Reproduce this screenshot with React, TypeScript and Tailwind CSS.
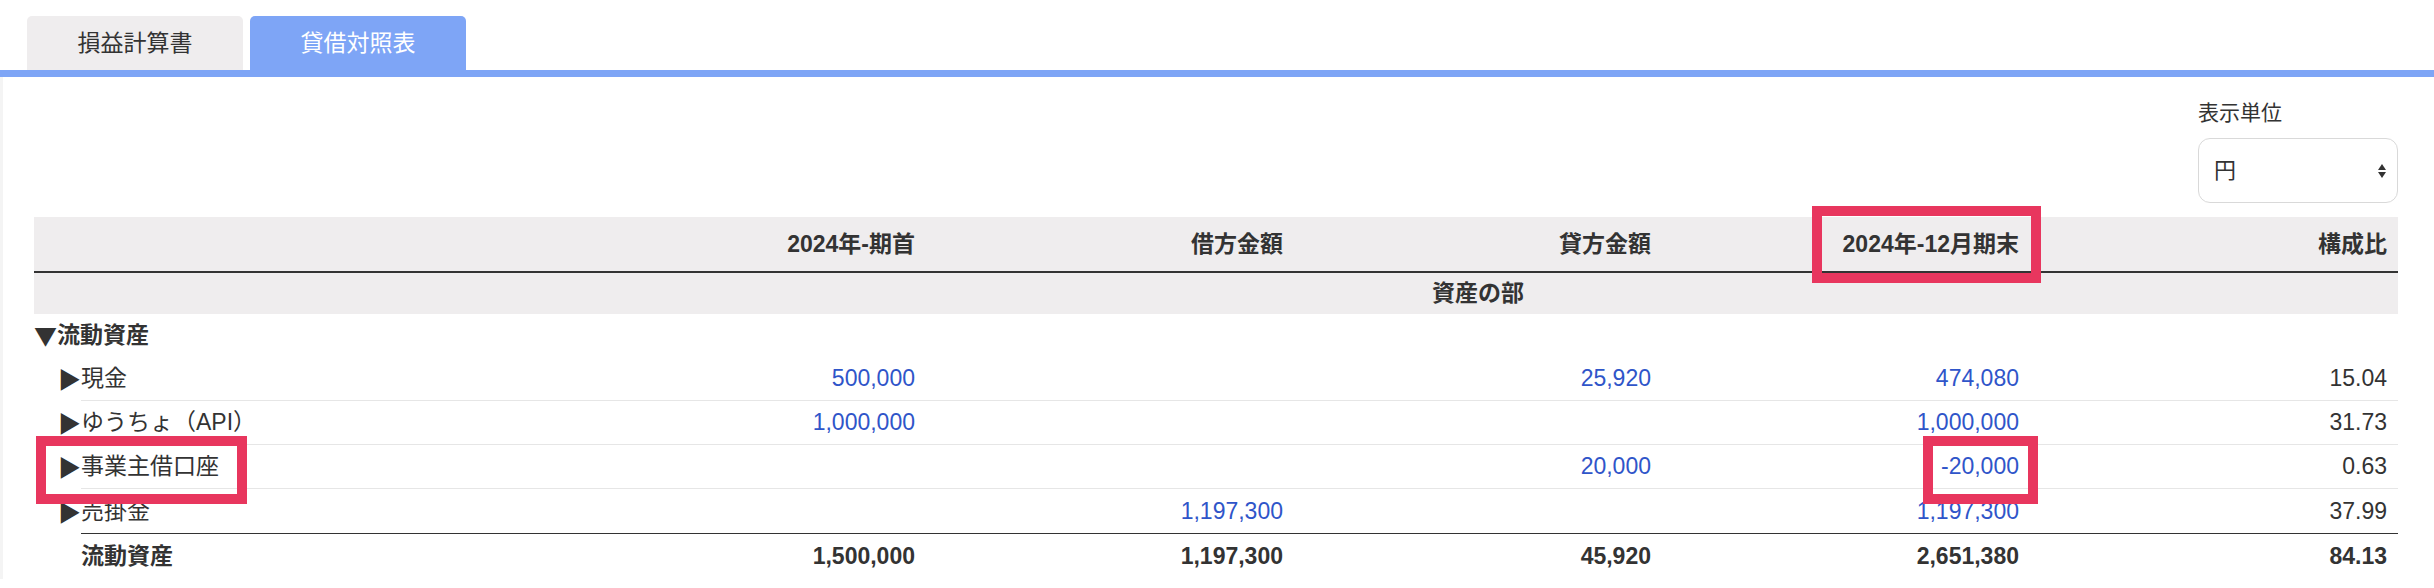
import React from 'react'

const rows = [
  { label: '現金', values: ['500,000', '', '25,920', '474,080', '15.04'] },
  { label: 'ゆうちょ（API）', values: ['1,000,000', '', '', '1,000,000', '31.73'] },
  { label: '事業主借口座', values: ['', '', '20,000', '-20,000', '0.63'] },
  { label: '売掛金', values: ['', '1,197,300', '', '1,197,300', '37.99'] },
]

const totals = ['1,500,000', '1,197,300', '45,920', '2,651,380', '84.13']
const headers = ['2024年-期首', '借方金額', '貸方金額', '2024年-12月期末', '構成比']

const grid = 'grid grid-cols-[1fr_repeat(5,368px)]'

function Marker({ char }: { char: string }) {
  return (
    <span className="inline-block w-[23px] font-['Noto_Sans_CJK_JP',sans-serif] text-[#333]">{char}</span>
  )
}

export default function App() {
  return (
    <div className="relative w-full h-[588px] overflow-hidden bg-white text-[23px] text-[#333] font-['Liberation_Sans','Noto_Sans_CJK_JP',sans-serif]">
      {/* Tabs */}
      <div className="flex gap-[7px] pt-[16px] pl-[27px]">
        <div className="flex items-center justify-center w-[216px] h-[54px] rounded-t-[5px] bg-[#efedee] text-[#333]">
          損益計算書
        </div>
        <div className="flex items-center justify-center w-[216px] h-[54px] rounded-t-[5px] bg-[#7ea5f6] text-white">
          貸借対照表
        </div>
      </div>
      <div className="h-[7px] bg-[#7ea5f6]" />

      <div className="pl-[31px] pr-[36px] border-l-[3px] border-[#f4f4f4]">
        {/* Unit selector */}
        <div className="flex justify-end">
          <div className="w-[200px] pt-[24px]">
            <div className="text-[21px] leading-[24px] text-[#333]">表示単位</div>
            <div className="mt-[13px] flex items-center justify-between h-[65px] pl-[15px] pr-[11px] rounded-[12px] border border-[#d9d9d9] bg-white">
              <span className="text-[22px]">円</span>
              <svg width="8" height="14" viewBox="0 0 8 14">
                <path d="M0 6 L4 0 L8 6 Z" fill="#333" />
                <path d="M0 8 L8 8 L4 14 Z" fill="#333" />
              </svg>
            </div>
          </div>
        </div>

        {/* Table */}
        <div className="mt-[14px]">
          <div className={`${grid} h-[56px] bg-[#efedee] border-b-2 border-[#333] font-bold`}>
            <div />
            {headers.map((h) => (
              <div key={h} className="flex items-center justify-end pr-[11px]">{h}</div>
            ))}
          </div>
          <div className={`${grid} h-[41px] bg-[#efedee] font-bold`}>
            <div />
            <div className="col-span-5 flex items-center justify-center">資産の部</div>
          </div>

          <div className="flex items-center h-[43px] font-bold">
            <Marker char="▼" />
            流動資産
          </div>

          {rows.map((r, i) => (
            <div
              key={r.label}
              className={`${grid} ml-[47px] h-[44px] ${i < rows.length - 1 ? 'border-b border-[#e6e6e6]' : ''}`}
            >
              <div className="flex items-center -ml-[23px]">
                <Marker char="▶" />
                {r.label}
              </div>
              {r.values.map((v, j) => (
                <div
                  key={j}
                  className={`flex items-center justify-end pr-[11px] ${j < 4 ? 'text-[#2f55c9]' : 'text-[#333]'}`}
                >
                  {v}
                </div>
              ))}
            </div>
          ))}

          <div className={`${grid} ml-[47px] h-[46px] border-t border-[#333] font-bold`}>
            <div className="flex items-center">流動資産</div>
            {totals.map((v, j) => (
              <div key={j} className="flex items-center justify-end pr-[11px]">{v}</div>
            ))}
          </div>
        </div>
      </div>

      {/* Annotation boxes */}
      <div className="absolute left-[1812px] top-[206px] w-[229px] h-[77px] border-[10px] border-[#e8365e]" />
      <div className="absolute left-[1923px] top-[436px] w-[115px] h-[68px] border-[10px] border-[#e8365e]" />
      <div className="absolute left-[36px] top-[436px] w-[211px] h-[68px] border-[10px] border-[#e8365e]" />
    </div>
  )
}
